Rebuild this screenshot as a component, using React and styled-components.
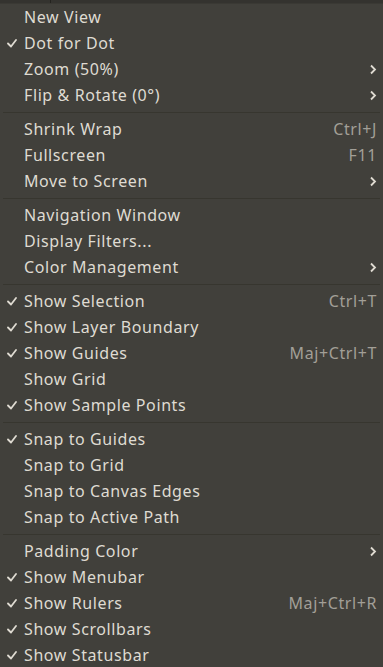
import React from "react";
import styled, { createGlobalStyle } from "styled-components";

const GlobalStyle = createGlobalStyle`
  html, body {
    margin: 0;
    padding: 0;
    background: #41403b;
  }
  body {
    font-family: "Noto Sans", "DejaVu Sans", sans-serif;
  }
`;

const groups = [
  [
    { label: "New View" },
    { label: "Dot for Dot", checked: true },
    { label: "Zoom (50%)", submenu: true },
    { label: "Flip & Rotate (0°)", submenu: true },
  ],
  [
    { label: "Shrink Wrap", shortcut: "Ctrl+J" },
    { label: "Fullscreen", shortcut: "F11" },
    { label: "Move to Screen", submenu: true },
  ],
  [
    { label: "Navigation Window" },
    { label: "Display Filters..." },
    { label: "Color Management", submenu: true },
  ],
  [
    { label: "Show Selection", checked: true, shortcut: "Ctrl+T" },
    { label: "Show Layer Boundary", checked: true },
    { label: "Show Guides", checked: true, shortcut: "Maj+Ctrl+T" },
    { label: "Show Grid" },
    { label: "Show Sample Points", checked: true },
  ],
  [
    { label: "Snap to Guides", checked: true },
    { label: "Snap to Grid" },
    { label: "Snap to Canvas Edges" },
    { label: "Snap to Active Path" },
  ],
  [
    { label: "Padding Color", submenu: true },
    { label: "Show Menubar", checked: true },
    { label: "Show Rulers", checked: true, shortcut: "Maj+Ctrl+R" },
    { label: "Show Scrollbars", checked: true },
    { label: "Show Statusbar", checked: true },
  ],
];

const Check = () => (
  <svg width="10" height="9" viewBox="0 0 10 9">
    <polyline
      points="1,4.5 4,7.5 9,1"
      fill="none"
      stroke="#dfdbd2"
      strokeWidth="1.8"
      strokeLinecap="round"
      strokeLinejoin="round"
    />
  </svg>
);

const Chevron = () => (
  <svg width="8" height="11" viewBox="0 0 8 11">
    <polyline
      points="2,1.5 6,5.5 2,9.5"
      fill="none"
      stroke="#dfdbd2"
      strokeWidth="1.8"
    />
  </svg>
);

const App = () => (
  <>
    <GlobalStyle />
    <Page>
      <TopStrip>
        <StripDivider />
      </TopStrip>
      <Menu>
        {groups.map((group, gi) => (
          <React.Fragment key={gi}>
            {gi > 0 && <Separator />}
            {group.map((item) => (
              <Item key={item.label}>
                <CheckSlot>{item.checked && <Check />}</CheckSlot>
                <Label>{item.label}</Label>
                {item.shortcut && <Shortcut>{item.shortcut}</Shortcut>}
                {item.submenu && (
                  <Arrow>
                    <Chevron />
                  </Arrow>
                )}
              </Item>
            ))}
          </React.Fragment>
        ))}
      </Menu>
    </Page>
  </>
);

const Page = styled.div`
  width: 383px;
  height: 667px;
  overflow: hidden;
  background: #41403b;
`;

const TopStrip = styled.div`
  height: 4px;
  background: #34332f;
  border-bottom: 1px solid #3a3934;
  box-sizing: border-box;
  display: flex;
  padding-left: 50px;
`;

const StripDivider = styled.div`
  width: 1px;
  background: #24231f;
`;

const Menu = styled.div`
  display: flex;
  flex-direction: column;
`;

const Item = styled.div`
  height: 26px;
  display: flex;
  align-items: center;
  padding: 0 6px 0 7px;
  color: #dfdbd2;
  font-size: 16px;
  letter-spacing: 0.6px;
`;

const CheckSlot = styled.div`
  width: 17px;
  display: flex;
  align-items: center;
  padding-top: 1px;
`;

const Label = styled.span`
  flex: 1;
  white-space: nowrap;
`;

const Shortcut = styled.span`
  color: #a29f97;
  white-space: nowrap;
`;

const Arrow = styled.span`
  display: flex;
  align-items: center;
`;

const Separator = styled.div`
  height: 8px;
  display: flex;
  align-items: center;
  padding: 0 3px;

  &::before {
    content: "";
    flex: 1;
    height: 1px;
    background: #37362f;
  }
`;

export default App;
